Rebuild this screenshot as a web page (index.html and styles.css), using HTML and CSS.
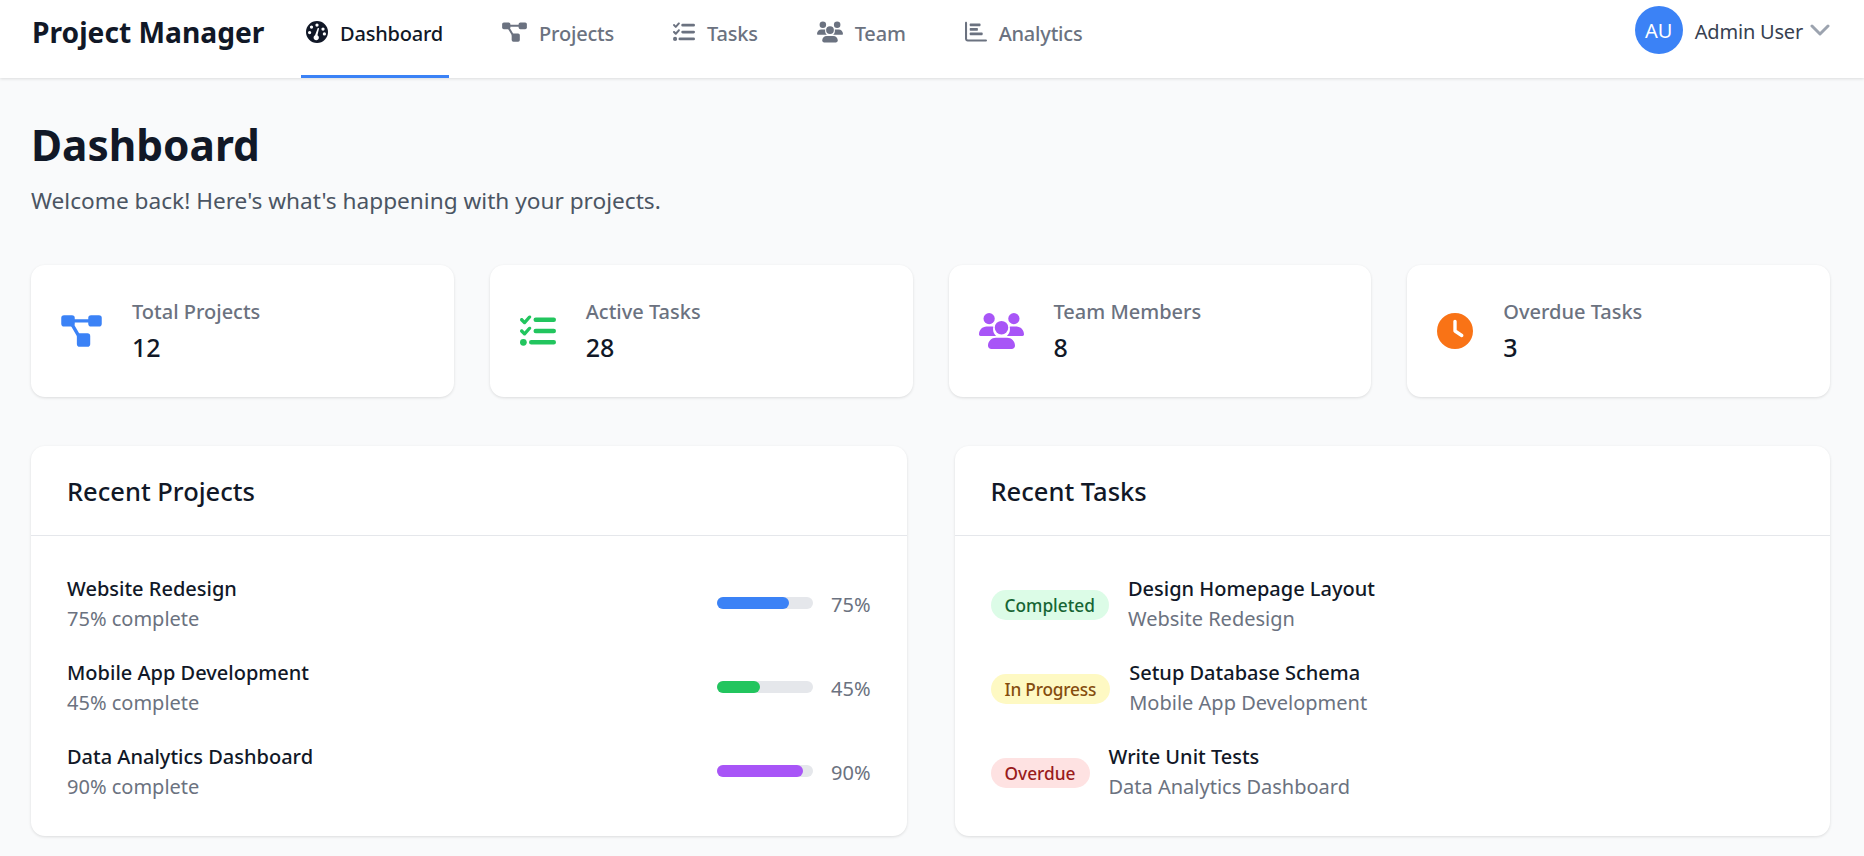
FILE: index.html
```html
<!DOCTYPE html>
<html lang="en">
<head>
  <meta charset="UTF-8">
  <meta name="viewport" content="width=device-width, initial-scale=1.0">
  <title>Project Manager</title>
  <link rel="stylesheet" href="styles.css">
</head>
<body>
  <svg class="sprites" aria-hidden="true">
    <symbol id="i-gauge" viewBox="0 0 512 512">
      <path d="M256 0a256 256 0 1 1 0 512A256 256 0 1 1 256 0zM256 56a38 38 0 1 0 0 76 38 38 0 1 0 0-76zM128 104a38 38 0 1 0 0 76 38 38 0 1 0 0-76zM396 150a38 38 0 1 0 0 76 38 38 0 1 0 0-76zM84 232a38 38 0 1 0 0 76 38 38 0 1 0 0-76zM428 262a38 38 0 1 0 0 76 38 38 0 1 0 0-76zM210 330l62-160c6-16 34-8 30 8l-36 152a62 62 0 1 1-56 0z" fill-rule="evenodd"/>
    </symbol>
    <symbol id="i-diagram" viewBox="0 0 576 512">
      <rect x="0" y="32" width="192" height="160" rx="40"/>
      <rect x="384" y="32" width="192" height="160" rx="40"/>
      <rect x="222" y="288" width="190" height="192" rx="40"/>
      <path d="M100 88h376v48H100zM118 150l41-24 124 212-41 24z"/>
    </symbol>
    <symbol id="i-tasks" viewBox="0 0 512 512">
      <path d="M152 38c10 9 11 24 2 34l-72 80c-4 5-11 8-17 8s-13-2-18-7L7 113c-9-10-9-25 0-34s25-9 34 0l23 23 54-60c9-10 24-11 34-2zm0 160c10 9 11 24 2 34l-72 80c-4 5-11 8-17 8s-13-2-18-7L7 273c-9-10-9-25 0-34s25-9 34 0l23 23 54-60c9-10 24-11 34-2z"/>
      <path d="M224 64h256a32 32 0 0 1 0 64H224a32 32 0 0 1 0-64zm0 160h256a32 32 0 0 1 0 64H224a32 32 0 0 1 0-64zM160 384h320a32 32 0 0 1 0 64H160a32 32 0 0 1 0-64z"/>
      <circle cx="48" cy="416" r="48"/>
    </symbol>
    <symbol id="i-users" viewBox="0 0 640 512">
      <circle cx="144" cy="80" r="80"/>
      <circle cx="496" cy="80" r="80"/>
      <circle cx="320" cy="208" r="96"/>
      <path d="M107 192h74c8 0 16 2 23 5-3 10-4 22-4 33 0 38 17 72 43 96H21c-12 0-21-9-21-21 0-62 48-113 107-113zm352 0h74c59 0 107 51 107 113 0 12-9 21-21 21H397c26-24 43-58 43-96 0-11-1-23-4-33 7-3 15-5 23-5zM240 352h160c62 0 112 50 112 112 0 26-21 48-48 48H176c-27 0-48-22-48-48 0-62 50-112 112-112z"/>
    </symbol>
    <symbol id="i-chart" viewBox="0 0 512 512">
      <path d="M24 20c13 0 24 11 24 24v370c0 9 7 16 16 16h424a24 24 0 0 1 0 48H64c-35 0-64-29-64-64V44c0-13 11-24 24-24z"/>
      <rect x="110" y="60" width="250" height="60" rx="14"/>
      <rect x="110" y="165" width="190" height="60" rx="14"/>
      <rect x="110" y="270" width="300" height="60" rx="14"/>
    </symbol>
    <symbol id="i-clock" viewBox="0 0 512 512">
      <path d="M256 0a256 256 0 1 1 0 512A256 256 0 1 1 256 0zM232 120v136c0 8 4 16 11 20l96 64c11 7 26 4 33-7s4-26-7-33l-85-57V120c0-13-11-24-24-24s-24 11-24 24z" fill-rule="evenodd"/>
    </symbol>
  </svg>

  <header class="topbar">
    <div class="logo">Project Manager</div>
    <nav class="nav">
      <a class="nav-item active"><svg class="nav-icon w-gauge"><use href="#i-gauge"/></svg>Dashboard</a>
      <a class="nav-item"><svg class="nav-icon w-diagram"><use href="#i-diagram"/></svg>Projects</a>
      <a class="nav-item"><svg class="nav-icon w-tasks"><use href="#i-tasks"/></svg>Tasks</a>
      <a class="nav-item"><svg class="nav-icon w-users"><use href="#i-users"/></svg>Team</a>
      <a class="nav-item"><svg class="nav-icon w-chart"><use href="#i-chart"/></svg>Analytics</a>
    </nav>
    <div class="user">
      <div class="avatar">AU</div>
      <span class="user-name">Admin User</span>
      <svg class="chevron" viewBox="0 0 20 12"><path d="M2 2l8 8 8-8"/></svg>
    </div>
  </header>

  <main class="page">
    <h1>Dashboard</h1>
    <p class="welcome">Welcome back! Here's what's happening with your projects.</p>

    <section class="stats">
      <div class="stat">
        <svg class="stat-icon blue d-diagram"><use href="#i-diagram"/></svg>
        <div class="stat-text">
          <div class="stat-label">Total Projects</div>
          <div class="stat-value">12</div>
        </div>
      </div>
      <div class="stat">
        <svg class="stat-icon green d-tasks"><use href="#i-tasks"/></svg>
        <div class="stat-text">
          <div class="stat-label">Active Tasks</div>
          <div class="stat-value">28</div>
        </div>
      </div>
      <div class="stat">
        <svg class="stat-icon purple d-users"><use href="#i-users"/></svg>
        <div class="stat-text">
          <div class="stat-label">Team Members</div>
          <div class="stat-value">8</div>
        </div>
      </div>
      <div class="stat">
        <svg class="stat-icon orange d-tasks"><use href="#i-clock"/></svg>
        <div class="stat-text">
          <div class="stat-label">Overdue Tasks</div>
          <div class="stat-value">3</div>
        </div>
      </div>
    </section>

    <section class="panels">
      <div class="panel">
        <h2 class="panel-title">Recent Projects</h2>
        <div class="panel-body">
          <div class="row">
            <div class="row-text">
              <div class="row-title">Website Redesign</div>
              <div class="row-sub">75% complete</div>
            </div>
            <div class="progress">
              <div class="bar"><div class="fill blue-bg" style="width: 75%"></div></div>
              <span class="pct">75%</span>
            </div>
          </div>
          <div class="row">
            <div class="row-text">
              <div class="row-title">Mobile App Development</div>
              <div class="row-sub">45% complete</div>
            </div>
            <div class="progress">
              <div class="bar"><div class="fill green-bg" style="width: 45%"></div></div>
              <span class="pct">45%</span>
            </div>
          </div>
          <div class="row">
            <div class="row-text">
              <div class="row-title">Data Analytics Dashboard</div>
              <div class="row-sub">90% complete</div>
            </div>
            <div class="progress">
              <div class="bar"><div class="fill purple-bg" style="width: 90%"></div></div>
              <span class="pct">90%</span>
            </div>
          </div>
        </div>
      </div>

      <div class="panel">
        <h2 class="panel-title">Recent Tasks</h2>
        <div class="panel-body">
          <div class="row start">
            <span class="badge done">Completed</span>
            <div class="row-text">
              <div class="row-title">Design Homepage Layout</div>
              <div class="row-sub">Website Redesign</div>
            </div>
          </div>
          <div class="row start">
            <span class="badge progressing">In Progress</span>
            <div class="row-text">
              <div class="row-title">Setup Database Schema</div>
              <div class="row-sub">Mobile App Development</div>
            </div>
          </div>
          <div class="row start">
            <span class="badge overdue">Overdue</span>
            <div class="row-text">
              <div class="row-title">Write Unit Tests</div>
              <div class="row-sub">Data Analytics Dashboard</div>
            </div>
          </div>
        </div>
      </div>
    </section>
  </main>
</body>
</html>
```

FILE: styles.css
```css
* {
  box-sizing: border-box;
}
body {
  margin: 0;
  background: #f9fafb;
  color: #111827;
  font-family: "Noto Sans", "Open Sans", sans-serif;
  height: 856px;
  overflow: hidden;
}
.sprites {
  display: none;
}
svg {
  fill: currentColor;
}

/* top bar */
.topbar {
  display: flex;
  align-items: flex-start;
  height: 78px;
  padding: 0 34px 0 32px;
  background: #fff;
  box-shadow: 0 1px 3px rgba(0, 0, 0, 0.12);
}
.logo {
  width: 269px;
  font-size: 28.2px;
  font-weight: 700;
  line-height: 64px;
}
.nav {
  display: flex;
  gap: 48px;
  height: 78px;
}
.nav-item {
  display: flex;
  align-items: center;
  gap: 12px;
  height: 78px;
  padding: 0 6px 8px 5px;
  color: #6b7280;
  font-size: 20px;
  font-weight: 500;
  letter-spacing: -0.2px;
  border-bottom: 3px solid transparent;
}
.nav-item.active {
  color: #111827;
  border-bottom-color: #3b82f6;
}
.nav-icon {
  height: 22px;
  margin-top: -3px;
}
.w-gauge, .w-tasks, .w-chart {
  width: 22px;
}
.w-diagram {
  width: 25px;
}
.w-users {
  width: 26px;
}
.user {
  display: flex;
  align-items: center;
  height: 60px;
  margin-left: auto;
}
.avatar {
  display: flex;
  align-items: center;
  justify-content: center;
  width: 48px;
  height: 48px;
  margin-right: 12px;
  border-radius: 50%;
  background: #3b82f6;
  color: #fff;
  font-size: 20px;
}
.user-name {
  margin: 3px 7px 0 0;
  color: #374151;
  font-size: 20px;
  letter-spacing: -0.2px;
}
.chevron {
  width: 20px;
  height: 12px;
  fill: none;
  stroke: #9ca3af;
  stroke-width: 3;
  stroke-linecap: round;
  stroke-linejoin: round;
}

/* page */
.page {
  padding: 38px 34px 0 31px;
}
h1 {
  margin: 0;
  font-size: 42.4px;
  font-weight: 700;
  line-height: 58px;
}
.welcome {
  margin: 11px 0 0;
  color: #4b5563;
  font-size: 22.65px;
  line-height: 32px;
}

/* stat cards */
.stats {
  display: grid;
  grid-template-columns: repeat(4, 1fr);
  gap: 36px;
  margin-top: 48px;
}
.stat {
  display: flex;
  align-items: center;
  gap: 30px;
  height: 132px;
  padding: 0 30px;
  background: #fff;
  border-radius: 14px;
  box-shadow: 0 1px 3px rgba(0, 0, 0, 0.12);
}
.stat-icon {
  height: 36px;
  flex: none;
}
.d-diagram {
  width: 41px;
}
.d-tasks {
  width: 36px;
}
.d-users {
  width: 45px;
}
.blue {
  color: #3b82f6;
}
.green {
  color: #22c55e;
}
.purple {
  color: #a855f7;
}
.orange {
  color: #f97316;
}
.stat-label {
  color: #6b7280;
  font-size: 20px;
  font-weight: 500;
  line-height: 28px;
}
.stat-value {
  margin-top: 4px;
  font-size: 25px;
  font-weight: 500;
  line-height: 34px;
}

/* panels */
.panels {
  display: grid;
  grid-template-columns: 1fr 1fr;
  gap: 48px;
  margin-top: 49px;
}
.panel {
  height: 390px;
  background: #fff;
  border-radius: 14px;
  box-shadow: 0 1px 3px rgba(0, 0, 0, 0.12);
}
.panel-title {
  height: 90px;
  margin: 0;
  padding: 0 36px;
  font-size: 25.5px;
  font-weight: 500;
  line-height: 90px;
  border-bottom: 1px solid #e5e7eb;
}
.panel-body {
  display: flex;
  flex-direction: column;
  gap: 24px;
  padding: 38px 36px 0;
}
.row {
  display: flex;
  align-items: center;
  justify-content: space-between;
  height: 60px;
}
.row.start {
  justify-content: flex-start;
  gap: 19px;
}
.row-title {
  font-size: 20px;
  font-weight: 500;
  line-height: 30px;
}
.row-sub {
  color: #6b7280;
  font-size: 20px;
  line-height: 30px;
}
.progress {
  display: flex;
  align-items: center;
  gap: 18px;
}
.bar {
  width: 96px;
  height: 12px;
  margin-top: -2px;
  background: #e5e7eb;
  border-radius: 6px;
}
.fill {
  height: 12px;
  border-radius: 6px;
}
.blue-bg {
  background: #3b82f6;
}
.green-bg {
  background: #22c55e;
}
.purple-bg {
  background: #a855f7;
}
.pct {
  color: #6b7280;
  font-size: 20px;
}
.badge {
  display: flex;
  align-items: center;
  height: 30px;
  margin-top: 2px;
  padding: 0 14px;
  border-radius: 15px;
  font-size: 17.3px;
  font-weight: 500;
}
.done {
  background: #dcfce7;
  color: #166534;
}
.progressing {
  background: #fef9c3;
  color: #854d0e;
  letter-spacing: -0.2px;
}
.overdue {
  background: #fee2e2;
  color: #991b1b;
}
```
